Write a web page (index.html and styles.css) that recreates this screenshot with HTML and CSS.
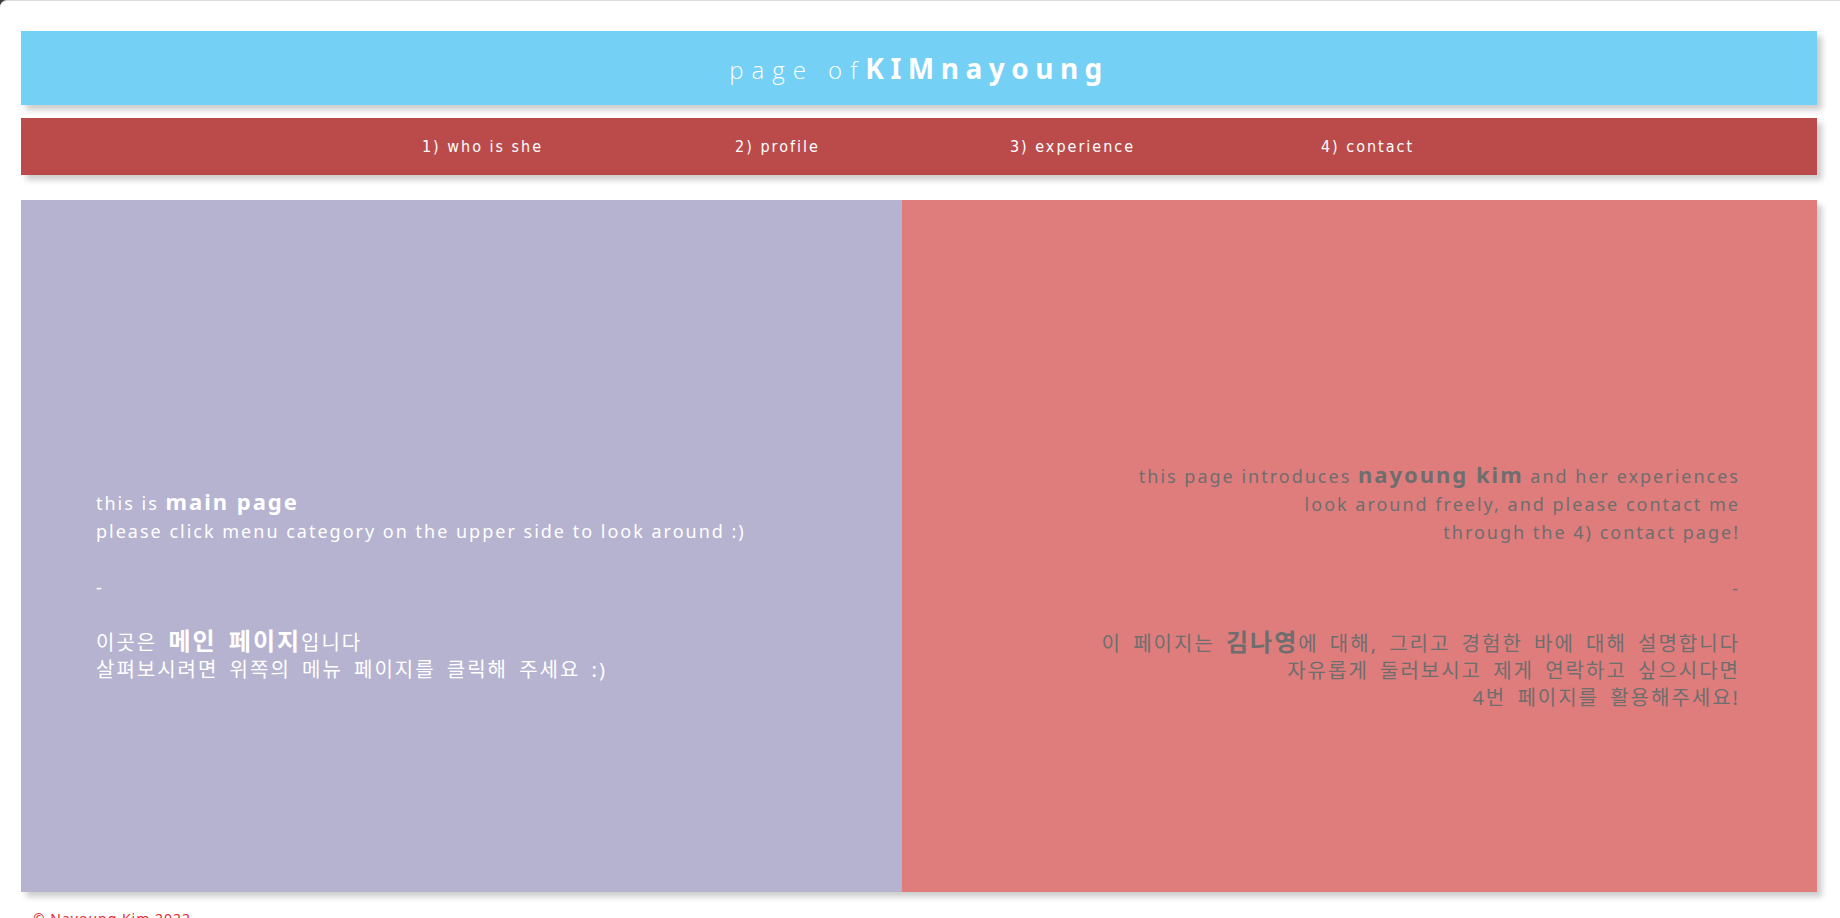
FILE: index.html
```html
<!DOCTYPE html>
<html lang="ko">
<head>
<meta charset="utf-8">
<title>page of KIMnayoung</title>
<link rel="stylesheet" href="styles.css">
</head>
<body>
<div class="frame">
  <header class="title-bar">
    <h1 class="title">page of<span class="title-name">KIMnayoung</span></h1>
  </header>
  <nav class="menu">
    <ul class="menu-list">
      <li class="menu-item">1) who is she</li>
      <li class="menu-item">2) profile</li>
      <li class="menu-item">3) experience</li>
      <li class="menu-item">4) contact</li>
    </ul>
  </nav>
  <main class="panels">
    <section class="panel panel-left">
      <div class="panel-text">
        <p>this is <b class="em">main page</b><br>please click menu category on the upper side to look around :)</p>
        <p>-</p>
        <p class="ko">이곳은 <b class="em-ko">메인 페이지</b>입니다<br>살펴보시려면 위쪽의 메뉴 페이지를 클릭해 주세요 :)</p>
      </div>
    </section>
    <section class="panel panel-right">
      <div class="panel-text">
        <p>this page introduces <b class="em">nayoung kim</b> and her experiences<br>look around freely, and please contact me<br>through the 4) contact page!</p>
        <p>-</p>
        <p class="ko">이 페이지는 <b class="em-ko">김나영</b>에 대해, 그리고 경험한 바에 대해 설명합니다<br>자유롭게 둘러보시고 제게 연락하고 싶으시다면<br>4번 페이지를 활용해주세요!</p>
      </div>
    </section>
  </main>
  <footer class="footer">© Nayoung Kim 2022</footer>
</div>
</body>
</html>
```
FILE: styles.css
```css
html {
  background: #3c3c3c;
}
body {
  margin: 0;
  font-family: "Noto Sans", "Noto Sans CJK KR", sans-serif;
}
.frame {
  background: #fff;
  border-top: 1px solid #dedede;
  border-top-left-radius: 7px;
  min-height: 917px;
  padding: 30px 23px 0 21px;
  box-sizing: border-box;
}
.title-bar {
  height: 74px;
  background: #74d0f4;
  box-shadow: 5px 5px 6px rgba(0, 0, 0, 0.2);
  display: flex;
  align-items: center;
  justify-content: center;
}
.title {
  margin: 0;
  color: #fff;
  font-family: "Open Sans", "Noto Sans", sans-serif;
  font-weight: 300;
  font-size: 24px;
  letter-spacing: 8px;
  line-height: 1;
}
.title-name {
  font-family: "Noto Sans", sans-serif;
  font-weight: 700;
  font-size: 28px;
  letter-spacing: 6.5px;
}
.menu {
  margin-top: 13px;
  height: 57px;
  background: #bb4b4b;
  box-shadow: 5px 5px 6px rgba(0, 0, 0, 0.2);
  display: flex;
  align-items: center;
  justify-content: center;
}
.menu-list {
  list-style: none;
  margin: 0 0 0 12px;
  padding: 0;
  display: flex;
}
.menu-item {
  width: 295px;
  text-align: center;
  color: #fff;
  font-family: "DejaVu Sans Condensed", "Liberation Sans Narrow", "Noto Sans", sans-serif;
  font-stretch: condensed;
  font-size: 16px;
  letter-spacing: 2px;
}
.panels {
  margin-top: 25px;
  height: 692px;
  display: grid;
  grid-template-columns: 881fr 915fr;
}
.panel {
  box-shadow: 5px 5px 6px rgba(0, 0, 0, 0.2);
  display: flex;
  align-items: center;
  padding-top: 78px;
  box-sizing: border-box;
  font-size: 18px;
  letter-spacing: 2px;
  line-height: 28px;
}
.panel-left {
  background: #b6b3d0;
  color: #fff;
  padding-left: 75px;
}
.panel-right {
  background: #df7d7d;
  color: #6e6e6e;
  justify-content: flex-end;
  text-align: right;
  padding-right: 77px;
}
.panel-text p {
  margin: 0;
}
.panel-text p + p {
  margin-top: 28px;
}
.panel-text p.ko {
  margin-top: 26px;
  font-size: 20px;
  word-spacing: 4px;
  line-height: 27px;
}
.em {
  font-size: 22px;
  font-weight: 700;
}
.em-ko {
  font-size: 24px;
  font-weight: 700;
}
.footer {
  margin-top: 18px;
  padding-left: 12px;
  color: #e3262b;
  font-size: 14px;
  letter-spacing: 1px;
  line-height: 18px;
}
```
